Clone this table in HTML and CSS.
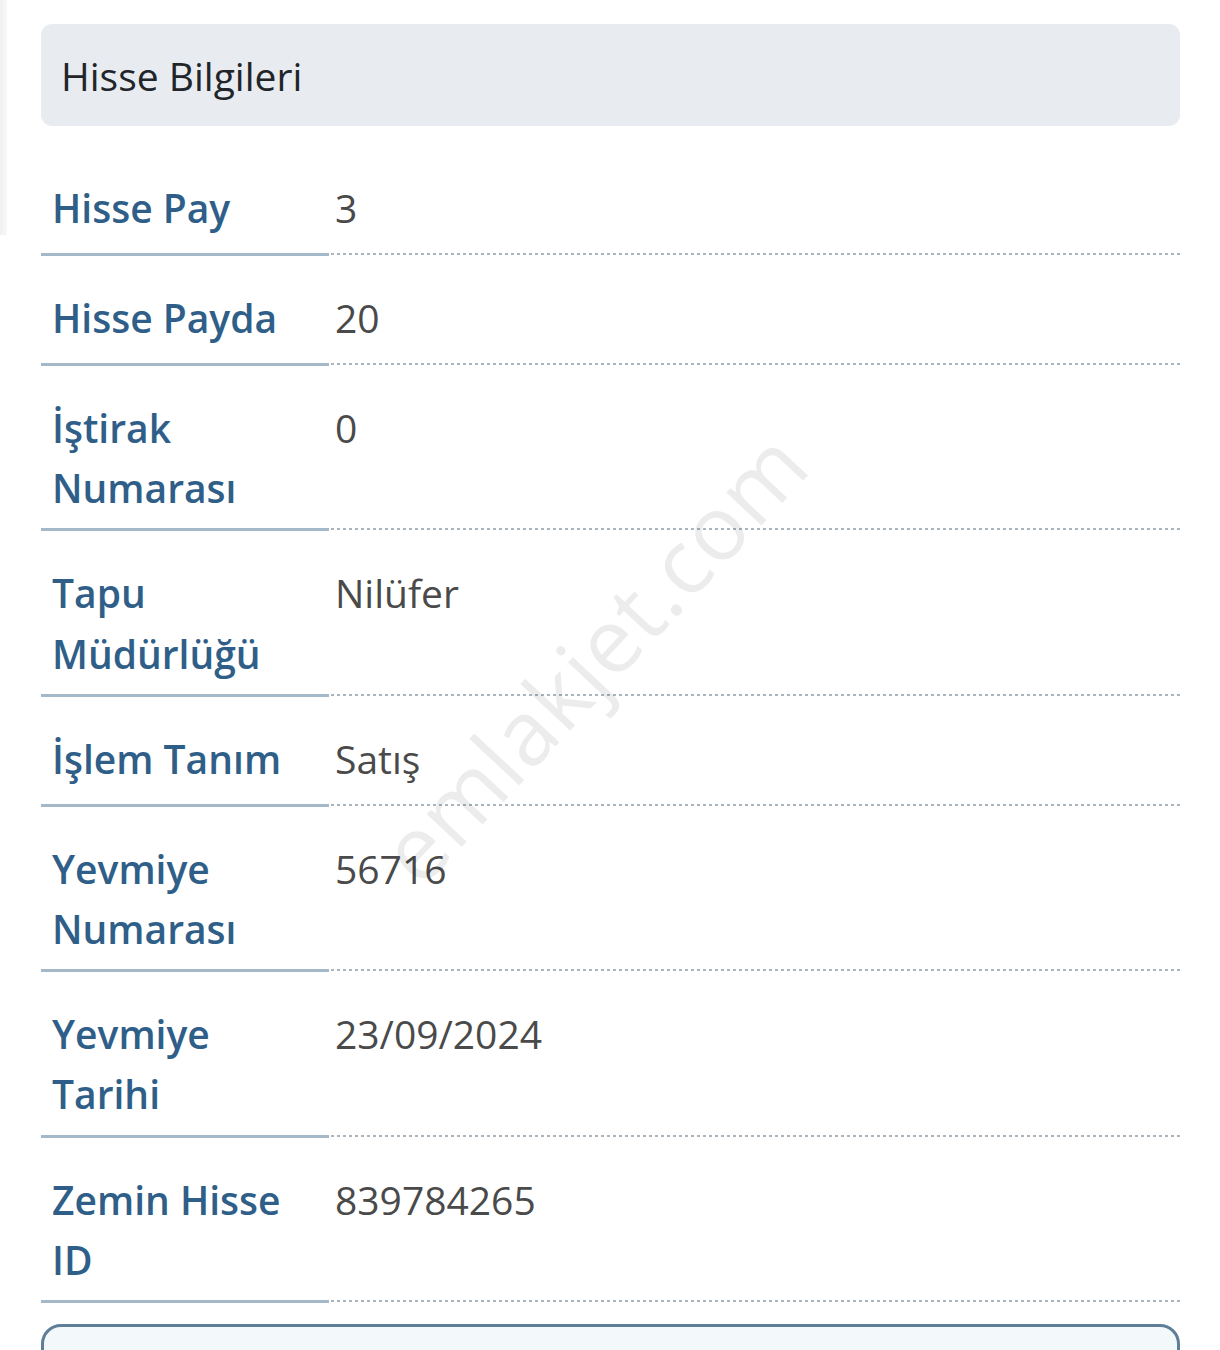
FILE: index.html
```html
<!DOCTYPE html>
<html lang="tr">
<head>
<meta charset="utf-8">
<title>Hisse Bilgileri</title>
<link rel="stylesheet" href="styles.css">
</head>
<body>
<div class="edge"></div>
<main class="page">
  <div class="header">Hisse Bilgileri</div>
  <div class="list">
    <div class="row"><div class="label">Hisse Pay</div><div class="value">3</div></div>
    <div class="row"><div class="label">Hisse Payda</div><div class="value">20</div></div>
    <div class="row"><div class="label">İştirak Numarası</div><div class="value">0</div></div>
    <div class="row"><div class="label">Tapu Müdürlüğü</div><div class="value">Nilüfer</div></div>
    <div class="row"><div class="label">İşlem Tanım</div><div class="value">Satış</div></div>
    <div class="row"><div class="label">Yevmiye Numarası</div><div class="value">56716</div></div>
    <div class="row"><div class="label">Yevmiye Tarihi</div><div class="value">23/09/2024</div></div>
    <div class="row"><div class="label">Zemin Hisse ID</div><div class="value">839784265</div></div>
  </div>
  <div class="next-box"></div>
  <div class="watermark">emlakjet.com</div>
</main>
</body>
</html>
```
FILE: styles.css
```css
html, body {
  margin: 0;
  padding: 0;
  background: #ffffff;
  overflow: hidden;
}
body {
  font-family: "Open Sans", "Noto Sans", sans-serif;
  height: 1350px;
  position: relative;
}
.edge {
  position: absolute;
  left: 0;
  top: 0;
  width: 7px;
  height: 235px;
  background: linear-gradient(to right, #f0f0f0, #f8f8f8);
}
.page {
  position: relative;
  margin: 0 40px 0 41px;
  padding-top: 24px;
}
.header {
  background: #e8ecf0;
  border-radius: 11px;
  height: 102px;
  display: flex;
  align-items: center;
  padding-left: 20px;
  font-size: 39px;
  color: #212529;
  box-sizing: border-box;
}
.list {
  margin-top: 20px;
}
.row {
  display: flex;
  align-items: stretch;
}
.label {
  width: 288px;
  flex: 0 0 288px;
  box-sizing: border-box;
  padding: 32px 16px 10px 11px;
  font-size: 39px;
  line-height: 60.2px;
  font-weight: 600;
  color: #2f5f88;
  border-bottom: 3px solid #a3b9ca;
}
.value {
  flex: 1;
  margin-left: 2px;
  padding: 34px 0 20px 4px;
  min-height: 110px;
  box-sizing: border-box;
  font-size: 39px;
  line-height: 56px;
  color: #4a4a4a;
  background-image: linear-gradient(to right, #aab5bd 0 3px, transparent 3px 6px);
  background-size: 6px 2px;
  background-repeat: repeat-x;
  background-position: left bottom 1px;
}
.next-box {
  margin-top: 21px;
  height: 120px;
  border: 3px solid #5f7f99;
  border-radius: 20px;
  background: #f3f8fb;
}
.watermark {
  position: absolute;
  left: 551px;
  top: 656px;
  transform: translate(-50%, -50%) rotate(-47deg);
  font-size: 90px;
  color: rgba(0, 0, 0, 0.075);
  white-space: nowrap;
  pointer-events: none;
  letter-spacing: 1px;
}
```
